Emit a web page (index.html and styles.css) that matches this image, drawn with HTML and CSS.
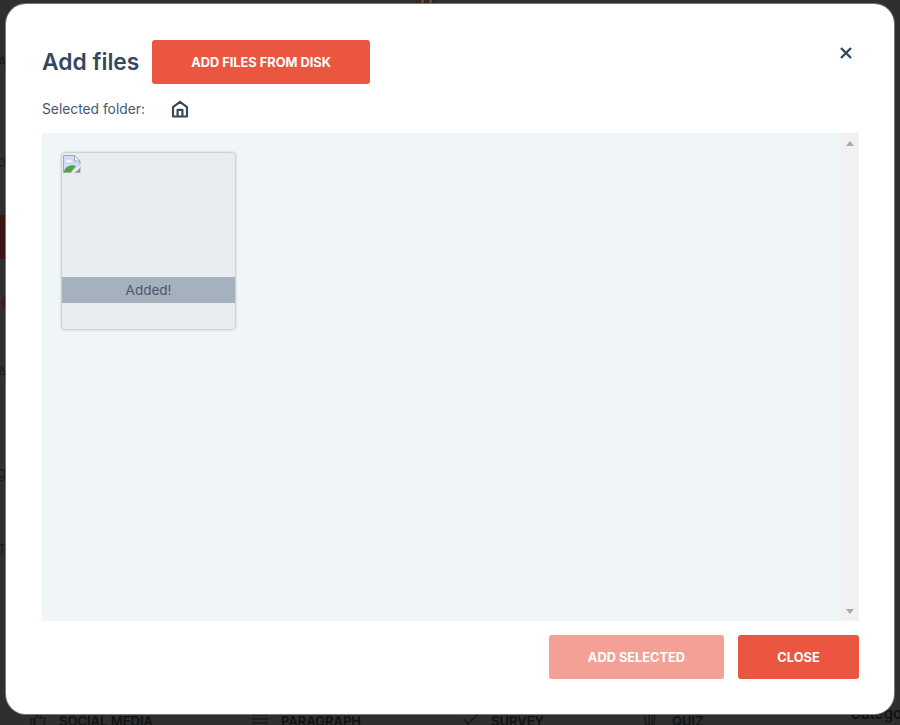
FILE: index.html
```html
<!DOCTYPE html>
<html lang="en">
<head>
<meta charset="utf-8">
<title>Add files</title>
<link rel="stylesheet" href="styles.css">
</head>
<body>
<div class="backdrop" aria-hidden="true">
  <span class="bg-red"></span>
  <span class="bg-top"></span>
  <span class="bg-circle"></span>
  <span class="bg-char c1">A</span>
  <span class="bg-char c2">o</span>
  <span class="bg-char c3">A</span>
  <span class="bg-char c4">g</span>
  <span class="bg-char c5">T</span>
  <svg class="bg-icon i1" width="16" height="14" viewBox="0 0 16 14"><path d="M1 6h3v8H1zM5 13V6l4-6 2 1-1 4h5l-1 8z" fill="none" stroke="#1a1b1d" stroke-width="1.500"/></svg>
  <svg class="bg-icon i2" width="16" height="12" viewBox="0 0 16 12"><path d="M0 2h16M0 6h16M0 10h16" stroke="#1a1b1d" stroke-width="1.500"/></svg>
  <svg class="bg-icon i3" width="16" height="12" viewBox="0 0 16 12"><path d="M1 6l4 5L15 1" fill="none" stroke="#1a1b1d" stroke-width="1.500"/></svg>
  <svg class="bg-icon i4" width="16" height="12" viewBox="0 0 16 12"><path d="M0 1h16M3 1l1 11h8l1-11M7 1v11M10 1v11" fill="none" stroke="#1a1b1d" stroke-width="1.500"/></svg>
  <span class="bg-label l1">SOCIAL MEDIA</span>
  <span class="bg-label l2">PARAGRAPH</span>
  <span class="bg-label l3">SURVEY</span>
  <span class="bg-label l4">QUIZ</span>
  <span class="bg-cat">Category</span>
</div>
<main class="modal">
  <header class="head">
    <h1 class="title">Add files</h1>
    <button class="btn btn-disk">ADD FILES FROM DISK</button>
    <svg class="close-x" width="14" height="14" viewBox="0 0 14 14"><path d="M2 2l10 10M12 2L2 12" fill="none" stroke="#34495e" stroke-width="2.400"/></svg>
  </header>
  <div class="folder">
    <span class="folder-label">Selected folder:</span>
    <svg class="home" width="18" height="18" viewBox="0 0 18 18"><path d="M2 16.500V7.200L9 1.800l7 5.400v9.300zM6.600 16.500V9.800h4.800v6.700" fill="none" stroke="#34495e" stroke-width="2.200" stroke-linejoin="round"/></svg>
  </div>
  <section class="browser">
    <div class="files">
      <article class="card">
        <svg class="broken" width="18" height="18" viewBox="0 0 18 18">
          <path d="M.5.5h11l5.500 5.500v11.500H.5z" fill="#cfdcf8" stroke="#a4a8ac"/>
          <path d="M11.500.5v5.500h5.500z" fill="#fff" stroke="#a4a8ac"/>
          <path d="M3 6.500c.5-2 3.500-2.500 5-.5 1.500 0 2 .5 2 1H3z" fill="#fff"/>
          <path d="M1 17v-1c2-5 7-7 12-5L8 17z" fill="#4ea53c"/>
          <path d="M8 18L18 9v2.500L11 18z" fill="#e8edf1"/>
          <path d="M13 17l4-3.500V17z" fill="#7f907f"/>
        </svg>
        <div class="added">Added!</div>
      </article>
    </div>
    <div class="scrollbar">
      <span class="arrow up"></span>
      <span class="arrow down"></span>
    </div>
  </section>
  <footer class="actions">
    <button class="btn btn-faded">ADD SELECTED</button>
    <button class="btn btn-close">CLOSE</button>
  </footer>
</main>
</body>
</html>
```
FILE: styles.css
```css
* { box-sizing: border-box; }
html, body { margin: 0; height: 100%; }
body {
  width: 900px;
  height: 725px;
  overflow: hidden;
  position: relative;
  background: #2f2f2f;
  font-family: "Inter", "Liberation Sans", sans-serif;
  padding: 4px 6px 11px;
}
.backdrop { position: absolute; inset: 0; overflow: hidden; color: #15171a; }
.bg-red { position: absolute; left: 0; top: 215px; width: 6px; height: 44px; background: #3a1512; }
.bg-top { position: absolute; left: 416px; top: 0; width: 20px; height: 4px; background: repeating-linear-gradient(90deg, #3c1e1c 0 5px, #4a4a4a 5px 8px); }
.bg-circle { position: absolute; left: 1px; top: 295px; width: 14px; height: 16px; border-radius: 50%; background: #3f1a17; }
.bg-char { position: absolute; left: -3px; font-size: 15px; line-height: 16px; color: #1b1c1f; }
.c1 { top: 54px; }
.c2 { top: 154px; }
.c3 { top: 365px; }
.c4 { top: 465px; }
.c5 { top: 542px; }
.bg-icon { position: absolute; top: 713px; }
.i1 { left: 30px; }
.i2 { left: 252px; }
.i3 { left: 463px; }
.i4 { left: 642px; }
.bg-label { position: absolute; top: 713px; font-size: 13px; font-weight: 600; line-height: 16px; color: #101214; }
.l1 { left: 59px; }
.l2 { left: 281px; }
.l3 { left: 491px; }
.l4 { left: 672px; }
.bg-cat { position: absolute; left: 850px; top: 704px; font-size: 15px; font-weight: 600; color: #101214; }
.modal {
  position: relative;
  width: 888px;
  height: 710px;
  background: #fff;
  border-radius: 20px;
  padding: 36px 35px 0 36px;
  box-shadow: 0 0 0 1px #777;
  color: #34495e;
}
.head { display: flex; align-items: center; height: 44px; }
.title { margin: 0 13px 0 0; font-size: 22.800px; font-weight: 600; line-height: 44px; width: 97px; white-space: nowrap; color: #34495e; }
.close-x { margin-left: auto; margin-right: 6px; margin-top: -18px; }
.btn {
  border: 0;
  border-radius: 3px;
  height: 44px;
  color: #fff;
  font-family: inherit;
  font-size: 12.800px;
  font-weight: 700;
  padding: 0;
  background: #eb5640;
}
.btn-disk { width: 218px; }
.folder { display: flex; align-items: center; height: 36px; margin-top: 7px; margin-bottom: 6px; }
.folder-label { font-size: 13.800px; color: #45586c; width: 129px; }
.browser { display: flex; height: 488px; background: #f0f5f8; }
.files { flex: 1; padding: 20px; }
.card {
  width: 173px;
  height: 176px;
  background: #e8edf1;
  border-radius: 2px;
  box-shadow: 0 0 3px rgba(0, 0, 0, .4);
  padding-top: 124px;
  position: relative;
}
.broken { position: absolute; left: 1px; top: 2px; }
.added { height: 26px; background: #a5b1bc; text-align: center; font-size: 13.500px; line-height: 26px; color: #45586c; }
.scrollbar { width: 18px; background: #f1f1f1; display: flex; flex-direction: column; justify-content: space-between; align-items: center; padding: 8px 0 7px; }
.arrow { width: 0; height: 0; border-left: 4px solid transparent; border-right: 4px solid transparent; }
.up { border-bottom: 5px solid #a8a8a8; }
.down { border-top: 5px solid #a8a8a8; }
.actions { display: flex; justify-content: flex-end; gap: 14px; margin-top: 14px; }
.btn-faded { width: 175px; background: #f5a095; }
.btn-close { width: 121px; }
```
